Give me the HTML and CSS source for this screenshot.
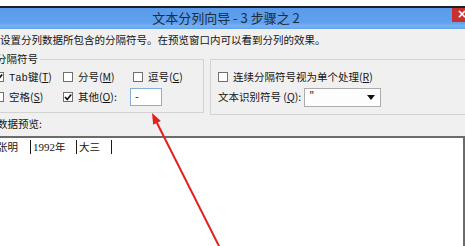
FILE: index.html
```html
<!DOCTYPE html>
<html lang="zh-CN">
<head>
<meta charset="utf-8">
<link rel="stylesheet" href="styles.css">
</head>
<body>
<div class="window">
  <div class="topstrip"></div>
  <div class="titlebar">
    <div class="title">文本分列向导 - 3 步骤之 2</div>
    <div class="close">×</div>
  </div>
  <div class="dialog">
    <p class="intro">设置分列数据所包含的分隔符号。在预览窗口内可以看到分列的效果。</p>
    <div class="groups">
      <fieldset class="group group-left">
        <legend>分隔符号</legend>
        <div class="opts">
          <label class="opt"><span class="cb"><svg viewBox="0 0 10 10" width="10" height="10"><path d="M2 5 L4.2 7.4 L8.2 2.4" fill="none" stroke="#111" stroke-width="1.6"/></svg></span><span><span class="mono">Tab</span>键(<u>T</u>)</span></label>
          <label class="opt"><span class="cb"></span><span>分号(<u>M</u>)</span></label>
          <label class="opt"><span class="cb"></span><span>逗号(<u>C</u>)</span></label>
          <label class="opt"><span class="cb"></span><span>空格(<u>S</u>)</span></label>
          <label class="opt"><span class="cb"><svg viewBox="0 0 10 10" width="10" height="10"><path d="M2 5 L4.2 7.4 L8.2 2.4" fill="none" stroke="#111" stroke-width="1.6"/></svg></span><span>其他(<u>O</u>):</span></label>
          <div class="other"><span class="input">-</span></div>
        </div>
      </fieldset>
      <fieldset class="group group-right">
        <label class="opt"><span class="cb"></span><span>连续分隔符号视为单个处理(<u>R</u>)</span></label>
        <div class="qualifier">
          <span class="qlabel">文本识别符号 (<u>Q</u>):</span>
          <span class="select"><span class="sval">"</span><svg class="caret" viewBox="0 0 8 5" width="8" height="5"><path d="M0 0 H8 L4 5 Z" fill="#111"/></svg></span>
        </div>
      </fieldset>
    </div>
    <div class="preview-label">数据预览:</div>
    <div class="preview">
      <div class="prow">
        <span class="cell c1">张明</span>
        <span class="cell c2"><span class="num">1992</span>年</span>
        <span class="cell c3">大三</span>
      </div>
    </div>
  </div>
  <svg class="arrow" viewBox="0 0 465 246" width="465" height="246">
    <line x1="222" y1="252" x2="155" y2="119" stroke="#e3201b" stroke-width="2"/>
    <polygon points="152,113 160.8,121 153.2,124.8" fill="#e3201b"/>
  </svg>
</div>
</body>
</html>
```

FILE: styles.css
```css
* { box-sizing: border-box; }
html, body { margin: 0; padding: 0; }
body {
  width: 465px;
  height: 246px;
  overflow: hidden;
  background: #f0f0f0;
  font-family: "Noto Sans CJK SC", "DejaVu Sans", sans-serif;
  font-size: 10.5px;
  color: #141414;
}
.window {
  position: relative;
  width: 465px;
  height: 246px;
  overflow: hidden;
  background: #f0f0f0;
  display: flex;
  flex-direction: column;
}
.topstrip {
  height: 8px;
  background: #ffffff;
  border-bottom: 2px solid #1b212b;
  flex: none;
}
.titlebar {
  height: 21px;
  flex: none;
  display: flex;
  background: linear-gradient(#5b9bea, #5fa1ef 70%, #78b2f2 85%, #62a3ef);
}
.title {
  flex: 1;
  text-align: center;
  font-size: 13px;
  line-height: 20px;
  color: #1f2c3b;
}
.close {
  width: 20px;
  height: 14px;
  margin-right: -7px;
  background: #c8302c;
  color: #fff;
  font-family: "DejaVu Sans", sans-serif;
  font-size: 12px;
  line-height: 13px;
  text-align: center;
  font-weight: bold;
}
.dialog {
  flex: 1;
  display: flex;
  flex-direction: column;
  padding-top: 4px;
}
.intro {
  margin: 0;
  line-height: 14px;
  padding-left: 0;
  white-space: nowrap;
}
.groups {
  display: flex;
  gap: 6px;
  margin: 5px -10px 0 -12px;
  align-items: flex-start;
}
.group {
  margin: 0;
  border: 1px solid #d3d3d3;
  min-width: 0;
}
.group-left {
  width: 216px;
  flex: none;
  padding: 1px 4px 5px 5px;
}
.group-left legend {
  padding: 0 2px;
  margin-left: 0;
  line-height: 14px;
}
.group-right {
  flex: 1;
  margin-top: 7px;
  padding: 7px 4px 7px 7px;
}
.opts {
  display: grid;
  grid-template-columns: 69px 70px auto;
  grid-auto-rows: 20px;
}
.opt {
  display: flex;
  align-items: center;
  gap: 5px;
  height: 20px;
  line-height: 14px;
  white-space: nowrap;
}
.cb {
  width: 10px;
  height: 10px;
  flex: none;
  background: #fff;
  border: 1px solid #707070;
  display: flex;
  align-items: center;
  justify-content: center;
}
.cb svg { display: block; margin: -1px; }
.mono { font-family: "Liberation Mono", monospace; font-size: 10.5px; }
.num { font-family: "Liberation Serif", serif; font-size: 11px; }
u { text-decoration: underline; text-underline-offset: 1px; }
.other {
  display: flex;
  align-items: center;
  height: 20px;
}
.input {
  margin-left: -3px;
  width: 32px;
  height: 18px;
  background: #fff;
  border: 1px solid #86aedb;
  line-height: 15px;
  padding-left: 4px;
  font-size: 11px;
}
.qualifier {
  display: flex;
  align-items: center;
  height: 20px;
  gap: 3px;
  white-space: nowrap;
}
.qlabel { line-height: 14px; }
.select {
  width: 77px;
  height: 19px;
  margin-top: 1px;
  background: #fdfdfd;
  border: 1px solid #acacac;
  display: flex;
  align-items: center;
  justify-content: space-between;
  padding: 0 5px 0 4px;
}
.sval { line-height: 14px; margin-top: -3px; }
.caret { display: block; }
.preview-label {
  margin-top: 2px;
  margin-left: -3px;
  line-height: 14px;
}
.preview {
  flex: 1;
  margin: 5px 0 0 -10px;
  background: #fff;
  border-top: 2px solid #6b6b6b;
  border-right: 2px solid #6b6b6b;
  padding-top: 2px;
}
.prow {
  display: flex;
  line-height: 14px;
}
.cell {
  border-right: 1px solid #1a1a1a;
  white-space: nowrap;
  height: 14px;
}
.c1 { width: 41px; padding-left: 7px; }
.c2 { width: 46px; padding-left: 2px; }
.c3 { width: 35px; padding-left: 2px; }
.arrow {
  position: absolute;
  left: 0;
  top: 0;
  pointer-events: none;
}
```
